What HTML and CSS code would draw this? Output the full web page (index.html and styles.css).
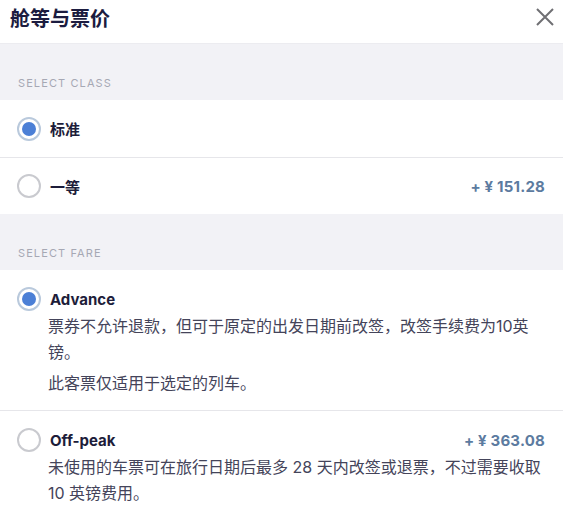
FILE: index.html
```html
<!DOCTYPE html>
<html lang="zh">
<head>
  <meta charset="UTF-8">
  <title>舱等与票价</title>
  <link rel="stylesheet" href="styles.css">
</head>
<body>
  <div class="sheet">
    <div class="sheet_head">
      <h1 class="sheet_title">舱等与票价</h1>
      <button class="sheet_close" aria-label="关闭">
        <svg width="20" height="20" viewBox="0 0 20 20"><path d="M2 2 L18 18 M18 2 L2 18" stroke="#6f6f73" stroke-width="2" fill="none"/></svg>
      </button>
    </div>

    <!--class options-->
    <div class="group_label">Select class</div>
    <label class="opt opt_short">
      <span class="radio checked"></span>
      <span class="opt_name">标准</span>
    </label>
    <label class="opt opt_short">
      <span class="radio"></span>
      <span class="opt_name">一等</span>
      <span class="opt_price">+ ¥ 151.28</span>
    </label>

    <!--fare options-->
    <div class="group_label">Select fare</div>
    <div class="opt opt_fare">
      <span class="radio checked"></span>
      <div class="fare_body">
        <div class="fare_top"><span class="opt_name">Advance</span></div>
        <p class="fare_text">票券不允许退款，但可于原定的出发日期前改签，改签手续费为10英镑。</p>
        <p class="fare_text">此客票仅适用于选定的列车。</p>
      </div>
    </div>
    <div class="opt opt_fare">
      <span class="radio"></span>
      <div class="fare_body">
        <div class="fare_top"><span class="opt_name">Off-peak</span><span class="opt_price">+ ¥ 363.08</span></div>
        <p class="fare_text">未使用的车票可在旅行日期后最多 28 天内改签或退票，不过需要收取 10 英镑费用。</p>
      </div>
    </div>
  </div>
</body>
</html>
```

FILE: styles.css
```css
body {
	margin: 0;
	background: #fff;
	font-family: Inter, "Noto Sans CJK SC", sans-serif;
	color: #1d1d3a;
}

.sheet {
	width: 563px;
	height: 505px;
	overflow: hidden;
}

/*header*/
.sheet_head {
	height: 43px;
	display: flex;
	align-items: center;
	justify-content: space-between;
	padding: 0 8px 0 10px;
	border-bottom: 1px solid #ececf0;
}

.sheet_title {
	margin: 0;
	font-size: 20px;
	font-weight: 700;
	color: #1c1c40;
	position: relative;
	top: -4px;
}

.sheet_close {
	border: 0;
	background: none;
	padding: 0;
	width: 20px;
	height: 20px;
	position: relative;
	top: -5px;
}

/*group headers*/
.group_label {
	background: #f2f2f6;
	height: 56px;
	box-sizing: border-box;
	padding: 32px 0 0 18px;
	font-size: 11px;
	letter-spacing: 1.1px;
	text-transform: uppercase;
	color: #a6a8b4;
}

/*option rows*/
.opt {
	display: flex;
	padding: 0 18px 0 17px;
	background: #fff;
}

.opt + .opt {
	border-top: 1px solid #e6e6ea;
}

.opt_short {
	height: 57px;
	align-items: center;
	box-sizing: border-box;
}

.radio {
	flex: none;
	width: 24px;
	height: 24px;
	box-sizing: border-box;
	border: 2px solid #c9cacf;
	border-radius: 50%;
	margin-right: 9px;
	position: relative;
}

.radio.checked {
	border: 2px solid #b9c9dc;
}

.radio.checked::after {
	content: "";
	position: absolute;
	left: 3px;
	top: 3px;
	width: 14px;
	height: 14px;
	border-radius: 50%;
	background: #4b7fd6;
}

.opt_name {
	font-size: 15px;
	font-weight: 700;
	color: #1d1d3a;
	flex: 1;
}

.opt_price {
	font-size: 15px;
	font-weight: 700;
	color: #5c7ba0;
	letter-spacing: 0.2px;
}

/*fare rows*/
.opt_fare {
	align-items: flex-start;
	padding-top: 17px;
	padding-bottom: 14px;
}

.fare_body {
	flex: 1;
}

.fare_top {
	display: flex;
	align-items: center;
	height: 24px;
}

.fare_text {
	margin: 2px 0 0 -2px;
	font-size: 16px;
	line-height: 26px;
	color: #44445a;
}

.fare_text + .fare_text {
	margin-top: 5px;
}
```
